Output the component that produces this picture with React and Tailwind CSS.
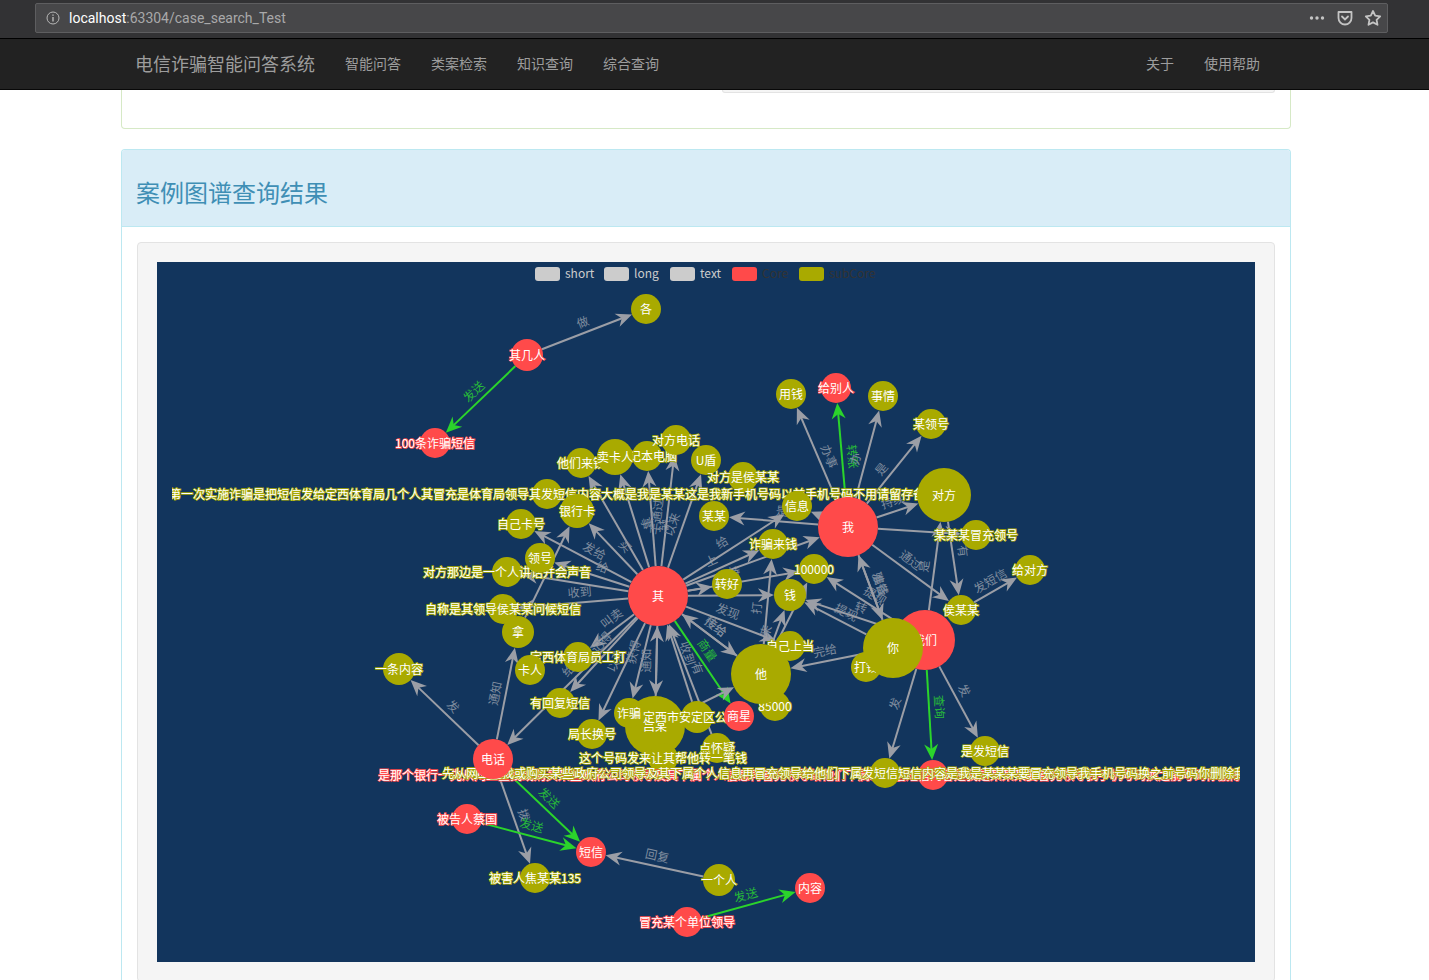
import React from "react";

const RED = "#ff4a4a";
const OLIVE = "#a9aa00";
const CJK = '"Noto Sans CJK SC", "Noto Sans", sans-serif';

const LONG_TOP =
  "第一次实施诈骗是把短信发给定西体育局几个人其冒充是体育局领导其发短信内容大概是我是某某这是我新手机号码以前手机号码不用请留存备";
const LONG_BOTTOM =
  "先从网上查找或购买某些政府公司领导及其下属个人信息再冒充领导给他们下属发短信短信内容是我是某某某要冒充领导我手机号码换之前号码你删除我";

// 节点: id -> [x, y, r, 文字, 颜色, 文字起点(长文字才有)] (坐标直接用页面坐标, 见 viewBox)
const nodes = {
  ge: [646, 309, 15, "各", OLIVE],
  jiren: [527, 355, 16, "其几人", RED],
  duanxin100: [435, 443, 15, "100条诈骗短信", RED],
  yongqian: [791, 394, 15, "用钱", OLIVE],
  geibieren: [836, 388, 15, "给别人", RED],
  shiqing: [883, 396, 15, "事情", OLIVE],
  lingdao: [931, 424, 15, "某领号", OLIVE],
  bijiben: [647, 456, 15, "笔记本电脑", OLIVE],
  tamen: [581, 463, 15, "他们来钱", OLIVE],
  maika: [615, 457, 18, "卖卡人", OLIVE],
  dfdh: [676, 440, 15, "对方电话", OLIVE],
  udun: [706, 460, 15, "U盾", OLIVE],
  dfhou: [743, 477, 15, "对方是侯某某", OLIVE],
  longtop: [547, 494, 15, LONG_TOP, OLIVE],
  yinhang: [577, 511, 17, "银行卡", OLIVE],
  kahao: [521, 524, 15, "自己卡号", OLIVE],
  moumou: [714, 516, 15, "某某", OLIVE],
  xinxi: [797, 506, 15, "信息", OLIVE],
  duifang: [944, 495, 27, "对方", OLIVE],
  wo: [848, 527, 30, "我", RED],
  maochong: [976, 535, 15, "某某某冒充领号", OLIVE],
  geidf: [1030, 570, 15, "给对方", OLIVE],
  duibian: [507, 572, 15, "对方那边是一个人讲话并会声音", OLIVE],
  linghao: [540, 558, 15, "领号", OLIVE],
  zicheng: [503, 609, 15, "自称是其领导侯某某问候短信", OLIVE],
  na: [518, 632, 16, "拿", OLIVE],
  zpqian: [773, 544, 15, "诈骗来钱", OLIVE],
  w100000: [814, 569, 15, "100000", OLIVE],
  zhuanhao: [727, 584, 15, "转好", OLIVE],
  qian: [790, 595, 16, "钱", OLIVE],
  qi: [658, 596, 30, "其", RED],
  houmm: [961, 610, 15, "侯某某", OLIVE],
  women: [925, 640, 30, "我们", RED],
  dadian: [866, 667, 15, "打钱", OLIVE],
  ni: [893, 648, 30, "你", OLIVE],
  yuangong: [578, 657, 15, "定西体育局员工打", OLIVE],
  karen: [530, 670, 15, "卡人", OLIVE],
  shangdang: [790, 646, 15, "自己上当", OLIVE],
  w85000: [775, 706, 15, "85000", OLIVE],
  ta: [761, 674, 30, "他", OLIVE],
  yitiao: [399, 669, 16, "一条内容", OLIVE],
  huifu: [560, 703, 15, "有回复短信", OLIVE],
  lvmou: [655, 726, 30, "吕某", OLIVE],
  zhapian: [629, 713, 15, "诈骗", OLIVE],
  juzhang: [592, 734, 15, "局长换号", OLIVE],
  gongan: [697, 717, 16, "定西市安定区公安局", OLIVE],
  shangxing: [739, 716, 15, "商星", RED],
  huaiyi: [717, 748, 15, "点怀疑", OLIVE],
  zhege: [663, 758, 15, "这个号码发来让其帮他转一笔钱", OLIVE],
  fa: [985, 751, 15, "是发短信", OLIVE],
  yinhangred: [933, 775, 15, "是那个银行一" + LONG_BOTTOM, RED, 378],
  longbot: [885, 773, 15, LONG_BOTTOM, OLIVE, 442],
  dianhua: [493, 759, 20, "电话", RED],
  beigao: [467, 819, 15, "被告人蔡国", RED],
  duanxin: [591, 852, 15, "短信", RED],
  beihai: [535, 878, 15, "被害人焦某某135", OLIVE],
  yigeren: [719, 880, 16, "一个人", OLIVE],
  neirong: [810, 888, 15, "内容", RED],
  danwei: [687, 922, 15, "冒充某个单位领导", RED],
};

// 边: [起点, 终点, 文字, 是否绿色]
const edges = [
  ["jiren", "ge", "做"],
  ["jiren", "duanxin100", "发送", true],
  ["wo", "yongqian", "办事"],
  ["wo", "geibieren", "转账", true],
  ["wo", "shiqing", "办"],
  ["wo", "lingdao", "是"],
  ["wo", "duifang", "持续"],
  ["wo", "moumou", "是"],
  ["wo", "xinxi", ""],
  ["wo", "maochong", ""],
  ["wo", "houmm", "通过"],
  ["qi", "tamen", ""],
  ["qi", "maika", "事"],
  ["qi", "bijiben", "转"],
  ["qi", "dfdh", "手通过"],
  ["qi", "udun", "以来"],
  ["qi", "yinhang", "买"],
  ["qi", "kahao", "发给"],
  ["qi", "linghao", "给"],
  ["qi", "duibian", ""],
  ["qi", "zicheng", "收到"],
  ["qi", "yuangong", "叫卖"],
  ["qi", "dianhua", "给"],
  ["qi", "huifu", "记得"],
  ["qi", "juzhang", "以及"],
  ["qi", "zhapian", "获得"],
  ["qi", "lvmou", "通知"],
  ["lvmou", "qi", ""],
  ["gongan", "qi", "收到"],
  ["huaiyi", "qi", "有"],
  ["qi", "shangxing", "商量", true],
  ["qi", "ta", "传给"],
  ["ta", "qi", "接给"],
  ["qi", "shangdang", "发现"],
  ["qi", "qian", ""],
  ["qi", "zhuanhao", ""],
  ["qi", "w100000", "持"],
  ["qi", "zpqian", "上"],
  ["qi", "xinxi", "给"],
  ["qi", "wo", ""],
  ["lvmou", "ta", ""],
  ["ta", "zpqian", "打"],
  ["ta", "qian", "来"],
  ["ta", "w100000", ""],
  ["ni", "ta", "完给"],
  ["ni", "qian", "提现"],
  ["women", "qian", "转"],
  ["women", "w100000", "提现"],
  ["ni", "wo", "骗钱"],
  ["wo", "ni", "准备"],
  ["women", "duifang", "是"],
  ["duifang", "houmm", "有"],
  ["houmm", "geidf", "发短信"],
  ["women", "longbot", "发"],
  ["women", "yinhangred", "查询", true],
  ["women", "fa", "发"],
  ["dianhua", "yitiao", "发"],
  ["dianhua", "na", "通知"],
  ["na", "yinhang", ""],
  ["dianhua", "duanxin", "发送", true],
  ["dianhua", "beihai", "拨"],
  ["beigao", "duanxin", "发送", true],
  ["yigeren", "duanxin", "回复"],
  ["danwei", "neirong", "发送", true],
];

function Edge({ from, to, label, green }) {
  const [x1, y1, r1] = nodes[from];
  const [x2, y2, r2] = nodes[to];
  const dx = x2 - x1;
  const dy = y2 - y1;
  const len = Math.hypot(dx, dy);
  const ux = dx / len;
  const uy = dy / len;
  const color = green ? "#2bd42b" : "#9b9ea6";
  // 箭头尖落在目标圆的边上
  const tx = x2 - ux * r2;
  const ty = y2 - uy * r2;
  const back = (d, s) => `${tx - ux * d - uy * s},${ty - uy * d + ux * s}`;
  const arrow = [back(0, 0), back(16, 7), back(11, 0), back(16, -7)].join(" ");
  const mx = (x1 + x2) / 2;
  const my = (y1 + y2) / 2;
  let angle = (Math.atan2(dy, dx) * 180) / Math.PI;
  if (angle > 90) angle -= 180;
  if (angle < -90) angle += 180;
  return (
    <g>
      <line
        x1={x1 + ux * r1}
        y1={y1 + uy * r1}
        x2={tx - ux * 8}
        y2={ty - uy * 8}
        stroke={color}
        strokeWidth="2"
      />
      <polygon points={arrow} fill={color} />
      {label && (
        <text
          transform={`translate(${mx} ${my}) rotate(${angle}) translate(0 -6)`}
          textAnchor="middle"
          fontSize="12"
          fill={green ? "#27b83a" : "#7f8c9e"}
        >
          {label}
        </text>
      )}
    </g>
  );
}

function Node({ id }) {
  const [x, y, r, label, color, start] = nodes[id];
  let clip;
  if (id === "longtop") clip = "url(#clipTop)";
  if (id === "longbot" || id === "yinhangred") clip = "url(#clipBottom)";
  return (
    <g>
      <circle cx={x} cy={y} r={r} fill={color} />
      <text
        x={start || x}
        y={y + 5}
        textAnchor={start ? "start" : "middle"}
        fontSize="12"
        fill="#fff"
        stroke={color}
        strokeWidth="1.5"
        clipPath={clip}
        style={{ paintOrder: "stroke" }}
      >
        {label}
      </text>
    </g>
  );
}

const legend = [
  { x: 535, c: "#ccc", t: "short", tc: "#ccc" },
  { x: 604, c: "#ccc", t: "long", tc: "#ccc" },
  { x: 670, c: "#ccc", t: "text", tc: "#ccc" },
  { x: 732, c: RED, t: "Core", tc: "#333" },
  { x: 799, c: OLIVE, t: "subCore", tc: "#333" },
];

function Graph() {
  return (
    <svg
      viewBox="157 262 1098 700"
      width="1098"
      height="700"
      className="block bg-[#12355d]"
      style={{ fontFamily: CJK }}
    >
      <defs>
        <clipPath id="clipTop" clipPathUnits="userSpaceOnUse">
          <rect x="172" y="480" width="746" height="30" />
        </clipPath>
        <clipPath id="clipBottom" clipPathUnits="userSpaceOnUse">
          <rect x="300" y="760" width="940" height="30" />
        </clipPath>
      </defs>
      {legend.map((l) => (
        <g key={l.t}>
          <rect x={l.x} y="267" width="25" height="14" rx="3" fill={l.c} />
          <text x={l.x + 30} y="278" fontSize="12" fill={l.tc}>
            {l.t}
          </text>
        </g>
      ))}
      {edges.map((e, i) => (
        <Edge key={i} from={e[0]} to={e[1]} label={e[2]} green={e[3]} />
      ))}
      {Object.keys(nodes).map((id) => (
        <Node key={id} id={id} />
      ))}
    </svg>
  );
}

function BrowserBar() {
  return (
    <div className="h-[39px] bg-[#323234] border-b border-black px-[35px] pt-[3px]">
      <div className="h-[30px] w-[1353px] flex items-center bg-[#474749] border border-[#5e5e60] rounded-[2px] pl-[10px] pr-[5px]">
        <svg width="14" height="14" viewBox="0 0 14 14" fill="none" stroke="#b8b8b8" strokeWidth="1">
          <circle cx="7" cy="7" r="6" />
          <path d="M7 6v4.5M7 3.5v1.2" strokeWidth="1.4" />
        </svg>
        <div className="ml-[9px] text-[14px] text-[#a9a9aa]" style={{ fontFamily: "Roboto, sans-serif" }}>
          <span className="text-white">localhost</span>:63304/case_search_Test
        </div>
        <div className="ml-auto flex items-center gap-[10px]">
          <svg width="18" height="18" viewBox="0 0 18 18" fill="#c4c4c4">
            <circle cx="3.5" cy="9" r="1.7" />
            <circle cx="9" cy="9" r="1.7" />
            <circle cx="14.5" cy="9" r="1.7" />
          </svg>
          <svg width="18" height="18" viewBox="0 0 18 18" fill="none" stroke="#c4c4c4" strokeWidth="1.8">
            <path d="M2.5 3h13v6a6.5 6.5 0 0 1-13 0z" strokeLinejoin="round" />
            <path d="M6 7.5l3 3 3-3" strokeLinecap="round" />
          </svg>
          <svg width="18" height="18" viewBox="0 0 18 18" fill="none" stroke="#c4c4c4" strokeWidth="1.8">
            <path d="M9 2l2.200 4.600 5 .7-3.600 3.500.9 5L9 13.400l-4.500 2.400.9-5L1.800 7.300l5-.7z" strokeLinejoin="round" />
          </svg>
        </div>
      </div>
    </div>
  );
}

function Navbar() {
  const left = ["智能问答", "类案检索", "知识查询", "综合查询"];
  const right = ["关于", "使用帮助"];
  return (
    <div className="h-[51px] bg-[#222] border-b border-[#080808] flex items-center pb-[2px] pl-[135px] pr-[169px] text-[#9d9d9d] text-[14px]">
      <div className="text-[18px] mr-[30px]">电信诈骗智能问答系统</div>
      <div className="flex gap-[30px]">
        {left.map((t) => (
          <span key={t}>{t}</span>
        ))}
      </div>
      <div className="ml-auto flex gap-[30px]">
        {right.map((t) => (
          <span key={t}>{t}</span>
        ))}
      </div>
    </div>
  );
}

export default function App() {
  return (
    <div className="h-[980px] overflow-hidden bg-white" style={{ fontFamily: CJK }}>
      <BrowserBar />
      <Navbar />
      <div className="ml-[121px] w-[1170px]">
        {/* 上一个面板, 只露出底部 */}
        <div className="h-[39px] border border-t-0 border-[#d6e9c6] rounded-b-[4px] pl-[600px] pr-[15px]">
          <div className="h-[3px] bg-[#f5f5f5] border border-t-0 border-[#e3e3e3] rounded-b-[4px]" />
        </div>
        <div className="mt-[20px] border border-b-0 border-[#bce8f1] rounded-t-[4px]">
          <div className="h-[77px] bg-[#d9edf7] border-b border-[#bce8f1] pl-[14px] flex items-center pt-[8px] rounded-t-[3px]">
            <h2 className="text-[24px] text-[#3f8fb5]">案例图谱查询结果</h2>
          </div>
          <div className="p-[15px]">
            <div className="bg-[#f5f5f5] border border-[#e3e3e3] rounded-[4px] p-[19px]">
              <Graph />
            </div>
          </div>
        </div>
      </div>
    </div>
  );
}
